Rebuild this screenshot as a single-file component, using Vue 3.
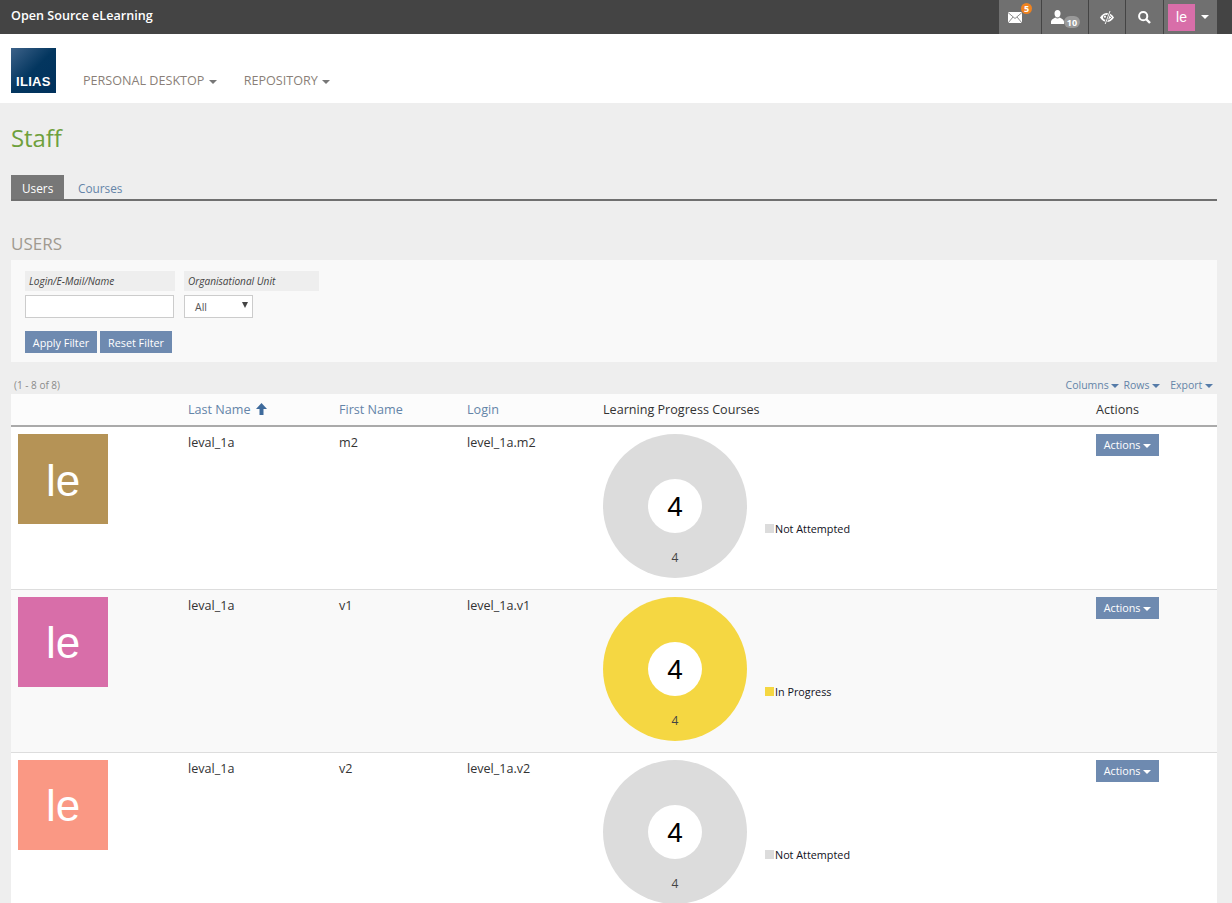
<script setup>
const rows = [
  { last: 'leval_1a', first: 'm2', login: 'level_1a.m2', avatar: '#b59356', color: '#dcdcdc', status: 'Not Attempted' },
  { last: 'leval_1a', first: 'v1', login: 'level_1a.v1', avatar: '#d86ea9', color: '#f5d742', status: 'In Progress' },
  { last: 'leval_1a', first: 'v2', login: 'level_1a.v2', avatar: '#fa9884', color: '#dcdcdc', status: 'Not Attempted' }
]
</script>

<template>
  <div class="page">
    <div class="topbar">
      <span class="brand">Open Source eLearning</span>
      <div class="tools">
        <div class="tool t-mail">
          <svg width="14" height="11" viewBox="0 0 14 11">
            <rect width="14" height="11" fill="#fff" />
            <path d="M0 .5 7 6.500 14 .5M0 11 5 5M14 11 9 5" fill="none" stroke="#707070" stroke-width=".8" />
          </svg>
          <span class="badge orange">5</span>
        </div>
        <div class="tool t-user">
          <svg width="13" height="14" viewBox="0 0 13 14"><path d="M6.500 0C4.500 0 3.500 1.500 3.500 3.500 3.500 5.500 4.500 7.500 6.500 7.500 8.500 7.500 9.500 5.500 9.500 3.500 9.500 1.500 8.500 0 6.500 0ZM4.300 7.500C2.800 8.300.5 9.300 0 11.500V14H13V11.500C12.500 9.300 10.200 8.300 8.700 7.500 7.300 8.900 5.700 8.900 4.300 7.500Z" fill="#fff" /></svg>
          <span class="badge grey">10</span>
        </div>
        <div class="tool t-eye">
          <svg width="14" height="13" viewBox="0 0 14 13">
            <path d="M0 6.500C2 3.300 4.500 2 7 2 9.500 2 12 3.300 14 6.500 12 9.700 9.500 11 7 11 4.500 11 2 9.700 0 6.500Z" fill="#fff" />
            <circle cx="5.600" cy="6.300" r="2.500" fill="#707070" />
            <circle cx="4.900" cy="5.700" r="1.100" fill="#fff" />
            <path d="M9.600 4.300C10.500 5 11 5.700 11.500 6.500 10.800 7.500 9.800 8.300 8.300 8.800" fill="none" stroke="#707070" stroke-width="1" />
            <path d="M10 0 5.200 13" stroke="#707070" stroke-width="2.400" />
            <path d="M10 0 5.200 13" stroke="#fff" stroke-width=".9" />
          </svg>
        </div>
        <div class="tool t-search">
          <svg width="13" height="13" viewBox="0 0 13 13"><circle cx="5.200" cy="5.200" r="4.100" fill="none" stroke="#fff" stroke-width="2" /><path d="M8 8 12 12" stroke="#fff" stroke-width="2.400" /></svg>
        </div>
        <div class="tool t-avatar">
          <span class="mini">le</span>
          <span class="caret white top-c"></span>
        </div>
      </div>
    </div>

    <div class="header">
      <div class="logo">ILIAS</div>
      <nav class="nav">
        <span class="nav-item">PERSONAL DESKTOP <span class="caret gray"></span></span>
        <span class="nav-item">REPOSITORY <span class="caret gray"></span></span>
      </nav>
    </div>

    <main class="main">
      <h1 class="title">Staff</h1>
      <div class="tabs">
        <span class="tab active">Users</span>
        <span class="tab">Courses</span>
      </div>
      <h2 class="section">USERS</h2>

      <div class="filter">
        <div class="fields">
          <div class="field f-login">
            <label>Login/E-Mail/Name</label>
            <input class="input" type="text" />
          </div>
          <div class="field f-org">
            <label>Organisational Unit</label>
            <div class="select">All<i></i></div>
          </div>
        </div>
        <div class="buttons">
          <button class="btn fbtn">Apply Filter</button>
          <button class="btn fbtn">Reset Filter</button>
        </div>
      </div>

      <div class="tablebar">
        <span class="count">(1 - 8 of 8)</span>
        <div class="links">
          <span>Columns <span class="caret blue"></span></span>
          <span>Rows <span class="caret blue"></span></span>
          <span class="export">Export <span class="caret blue"></span></span>
        </div>
      </div>

      <table class="table">
        <colgroup>
          <col class="c1" /><col class="c2" /><col class="c3" />
          <col class="c4" /><col class="c5" /><col class="c6" />
        </colgroup>
        <thead>
          <tr>
            <th></th>
            <th class="sort">Last Name
              <svg class="arrow" width="11" height="12" viewBox="0 0 11 12"><path d="M5.500 0 11 6H7.500V12H3.500V6H0Z" fill="#3f6b9c" /></svg>
            </th>
            <th class="sort">First Name</th>
            <th class="sort">Login</th>
            <th>Learning Progress Courses</th>
            <th>Actions</th>
          </tr>
        </thead>
        <tbody>
          <tr v-for="r in rows" :key="r.login">
            <td><div class="avatar" :style="{ background: r.avatar }">le</div></td>
            <td>{{ r.last }}</td>
            <td>{{ r.first }}</td>
            <td>{{ r.login }}</td>
            <td>
              <div class="chart">
                <svg width="144" height="144" viewBox="0 0 144 144">
                  <circle cx="72" cy="72" r="72" :fill="r.color" />
                  <circle cx="72" cy="72" r="27" fill="#fff" />
                  <text x="72" y="82" class="big" text-anchor="middle">4</text>
                  <text x="72" y="128" class="small" text-anchor="middle">4</text>
                </svg>
                <div class="legend"><i :style="{ background: r.color }"></i>{{ r.status }}</div>
              </div>
            </td>
            <td><button class="btn act">Actions <span class="caret white"></span></button></td>
          </tr>
        </tbody>
      </table>
    </main>
  </div>
</template>

<style>
html, body { margin: 0; overflow: hidden; background: #eee; }
</style>

<style scoped>
* { box-sizing: border-box; }
.page { height: 903px; overflow: hidden; font-family: "Open Sans", sans-serif; font-size: 12.6px; color: #333; background: #eee; }

.topbar { height: 34px; background: #444; display: flex; justify-content: space-between; padding: 0 15px 0 11px; }
.brand { color: #fff; font-size: 12.6px; font-weight: 600; line-height: 32px; }
.tools { display: flex; background: #707070; }
.tool { position: relative; height: 34px; display: flex; align-items: center; border-left: 1px solid #444; }
.tool:first-child { border-left: 0; }
.t-mail { width: 42px; padding-left: 9px; }
.t-user { width: 47px; padding-left: 9px; }
.t-eye { width: 37px; padding-left: 11px; }
.t-search { width: 38px; padding-left: 12px; }
.t-avatar { width: 54px; padding-left: 4px; }
.badge { position: absolute; color: #fff; font-size: 9px; font-weight: 700; line-height: 1; display: flex; align-items: center; justify-content: center; border-radius: 6px; }
.orange { background: #f08320; width: 11px; height: 11px; left: 22px; top: 3px; }
.grey { background: #999; width: 16px; height: 12px; left: 22px; top: 16px; }
.mini { width: 27px; height: 27px; background: #d86ea9; color: #fff; font-family: "Liberation Sans", sans-serif; font-size: 14px; display: flex; align-items: center; justify-content: center; }
.caret { display: inline-block; width: 0; height: 0; border-left: 4px solid transparent; border-right: 4px solid transparent; border-top: 4px solid #777; vertical-align: middle; }
.caret.white { border-top-color: #fff; }
.caret.gray { border-top-color: #777; margin-left: 1px; }
.caret.blue { border-top-color: #557ba8; }
.top-c { margin-left: 6px; }

.header { height: 69px; background: #fff; position: relative; padding: 14px 0 0 11px; display: flex; }
.logo { width: 45px; height: 45px; background: linear-gradient(135deg, #3d6289 0%, #03365f 50%, #00315c 100%); color: #fff; font-family: "Liberation Sans", sans-serif; font-size: 13px; font-weight: 700; padding: 25px 0 0 5px; line-height: 17px; letter-spacing: .3px; }
.nav { display: flex; gap: 27px; padding: 24px 0 0 27px; }
.nav-item { color: #8a7f78; font-size: 12.6px; line-height: 17px; }

.main { padding: 0 15px 0 11px; }
.title { margin: 0; padding-top: 18px; height: 72px; color: #6ea03c; font-size: 24px; font-weight: 400; line-height: 33px; letter-spacing: -.1px; }
.tabs { height: 26px; display: flex; border-bottom: 2px solid #6f6f6f; }
.tab { height: 24px; padding: 0 14px; color: #6484a8; font-size: 11.8px; line-height: 27px; }
.tab.active { width: 53px; padding: 0 11px; background: #777; color: #fff; }
.section { margin: 31px 0 0; height: 28px; color: #a09a90; font-size: 17px; font-weight: 400; line-height: 23px; }

.filter { height: 102px; background: #f9f9f9; padding: 11px 14px; }
.fields { display: flex; gap: 9px; }
.field { display: flex; flex-direction: column; }
.f-login { width: 150px; }
.f-org { width: 135px; }
.field label { height: 20px; background: #eee; color: #444; font-size: 10.08px; font-style: italic; font-weight: 400; line-height: 20px; padding-left: 4px; margin-bottom: 4px; }
.input { width: 149px; height: 23px; border: 1px solid #ccc; background: #fff; margin: 0; padding: 0; }
.select { position: relative; width: 69px; height: 23px; border: 1px solid #ccc; background: #fff; color: #555; font-size: 10.5px; line-height: 23px; padding-left: 10px; }
.select i { position: absolute; right: 4px; top: 6px; border-left: 3px solid transparent; border-right: 3px solid transparent; border-top: 6px solid #444; }
.buttons { display: flex; gap: 3px; margin-top: 13px; }
.btn { height: 22px; width: 72px; border: 0; padding: 0; background: #6e8ab0; color: #fff; font-family: inherit; font-size: 10.8px; line-height: 22px; }
.fbtn { padding-top: 1px; }

.tablebar { height: 32px; display: flex; justify-content: space-between; align-items: flex-end; padding: 0 4px 1px 3px; line-height: 15px; }
.count { color: #8a8a8a; font-size: 10px; }
.links { display: flex; gap: 4px; color: #6484a8; font-size: 10.5px; }
.export { margin-left: 6px; }

.table { width: 1206px; table-layout: fixed; border-collapse: collapse; }
.c1 { width: 170px; }
.c2 { width: 151px; }
.c3 { width: 128px; }
.c4 { width: 136px; }
.c5 { width: 493px; }
.c6 { width: 128px; }
.table th { height: 31px; background: #fcfcfc; border-bottom: 2px solid #aaa; padding: 0 7px; font-size: 12.6px; font-weight: 400; color: #333; text-align: left; vertical-align: middle; line-height: 17px; box-sizing: content-box; }
.table th.sort { color: #6484a8; }
.arrow { vertical-align: -1px; margin-left: 2px; }
.table td { height: 163px; padding: 7px; vertical-align: top; background: #fff; border-bottom: 1px solid #ddd; line-height: 17px; font-size: 12.6px; color: #333; }
.table tbody tr:nth-child(2) td { background: #f9f9f9; }
.avatar { width: 90px; height: 90px; padding-top: 2px; color: #fff; font-family: "Liberation Sans", sans-serif; font-size: 44px; display: flex; align-items: center; justify-content: center; }
.chart { display: flex; align-items: flex-start; height: 144px; }
.chart svg { display: block; flex: none; }
.big { font-family: "Liberation Sans", sans-serif; font-size: 28px; fill: #000; }
.small { font-family: "Open Sans", sans-serif; font-size: 12px; fill: #444; }
.legend { margin: 87px 0 0 18px; display: flex; align-items: center; font-size: 10.8px; color: #112; white-space: nowrap; line-height: 15px; }
.legend i { width: 9px; height: 9px; margin-right: 1px; }
.act { width: 63px; }
</style>
